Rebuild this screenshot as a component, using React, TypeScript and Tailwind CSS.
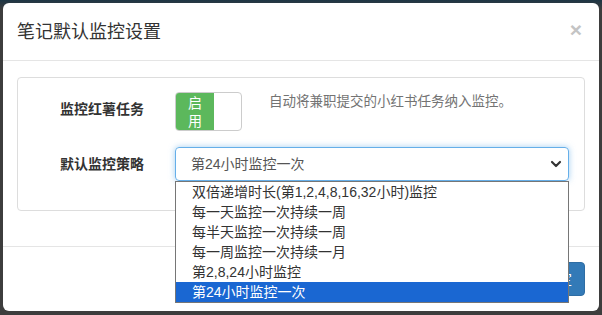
import { ChevronDown } from 'lucide-react'

const options = [
  '双倍递增时长(第1,2,4,8,16,32小时)监控',
  '每一天监控一次持续一周',
  '每半天监控一次持续一周',
  '每一周监控一次持续一月',
  '第2,8,24小时监控',
  '第24小时监控一次',
]

const font = { fontFamily: '"Liberation Sans", "Noto Sans CJK SC", sans-serif' }

export default function App() {
  const selected = options.length - 1

  return (
    <div style={font} className="w-[602px] h-[315px] overflow-hidden bg-[#3d3d3d] bg-gradient-to-b from-[#1d3645] from-[0%] to-[#3d3d3d] to-[3%] p-[3px] pr-[3px]">
      <div className="w-[596px] h-[308px] bg-white rounded-[6px] flex flex-col">
        {/* header */}
        <div className="h-[58px] border-b border-[#e5e5e5] pl-[14px] pr-[17px] flex items-center justify-between shrink-0">
          <h4 className="text-[18px] text-[#333] leading-[20px] pt-[1px]">笔记默认监控设置</h4>
          <button className="text-[21px] font-bold text-[#c4c4c4] leading-none -mt-[4px]">×</button>
        </div>

        {/* body */}
        <div className="px-[14px] pt-[16px] pb-[35px] border-b border-[#e5e5e5]">
          <div className="border border-[#dddddd] rounded-[4px] pt-[14px] pb-[29px]">
            <div className="flex items-start">
              <label className="w-[126px] text-right text-[14px] font-bold text-[#333] leading-[20px] pt-[7px]">监控红薯任务</label>
              <div className="ml-[31px] w-[67px] h-[39px] border border-[#cccccc] rounded-[4px] flex overflow-hidden">
                <div className="w-[38px] bg-[#5cb85c] text-white text-[14px] leading-[18px] flex items-center justify-center text-center px-[9px]">
                  启用
                </div>
              </div>
              <p className="ml-[27px] text-[13.5px] text-[#737373] leading-[20px]">自动将兼职提交的小红书任务纳入监控。</p>
            </div>

            <div className="flex items-center mt-[16px]">
              <label className="w-[126px] text-right text-[14px] font-bold text-[#333] leading-[20px]">默认监控策略</label>
              <div className="ml-[31px] relative">
                <div className="w-[394px] h-[34px] border border-[#66afe9] rounded-[4px] shadow-[0_0_6px_rgba(102,175,233,0.6)] flex items-center justify-between pl-[15px] pr-[4px]">
                  <span className="text-[14px] text-[#555]">{options[selected]}</span>
                  <ChevronDown className="w-[16px] h-[16px] text-[#333]" strokeWidth={3.2} />
                </div>
                <ul className="absolute left-0 top-[34px] w-[394px] bg-white border border-[#767676] z-10">
                  {options.map((o, i) => (
                    <li
                      key={o}
                      className={`h-[20px] pl-[16px] text-[14px] leading-[20px] ${
                        i === selected ? 'bg-[#1a67d2] text-white' : 'text-[#333]'
                      }`}
                    >
                      {o}
                    </li>
                  ))}
                </ul>
              </div>
            </div>
          </div>
        </div>

        {/* footer */}
        <div className="flex justify-end px-[14px] pt-[15px]">
          <button className="h-[34px] px-[12px] bg-[#337ab7] border border-[#2e6da4] rounded-[4px] text-white text-[14px]">确定</button>
        </div>
      </div>
    </div>
  )
}
